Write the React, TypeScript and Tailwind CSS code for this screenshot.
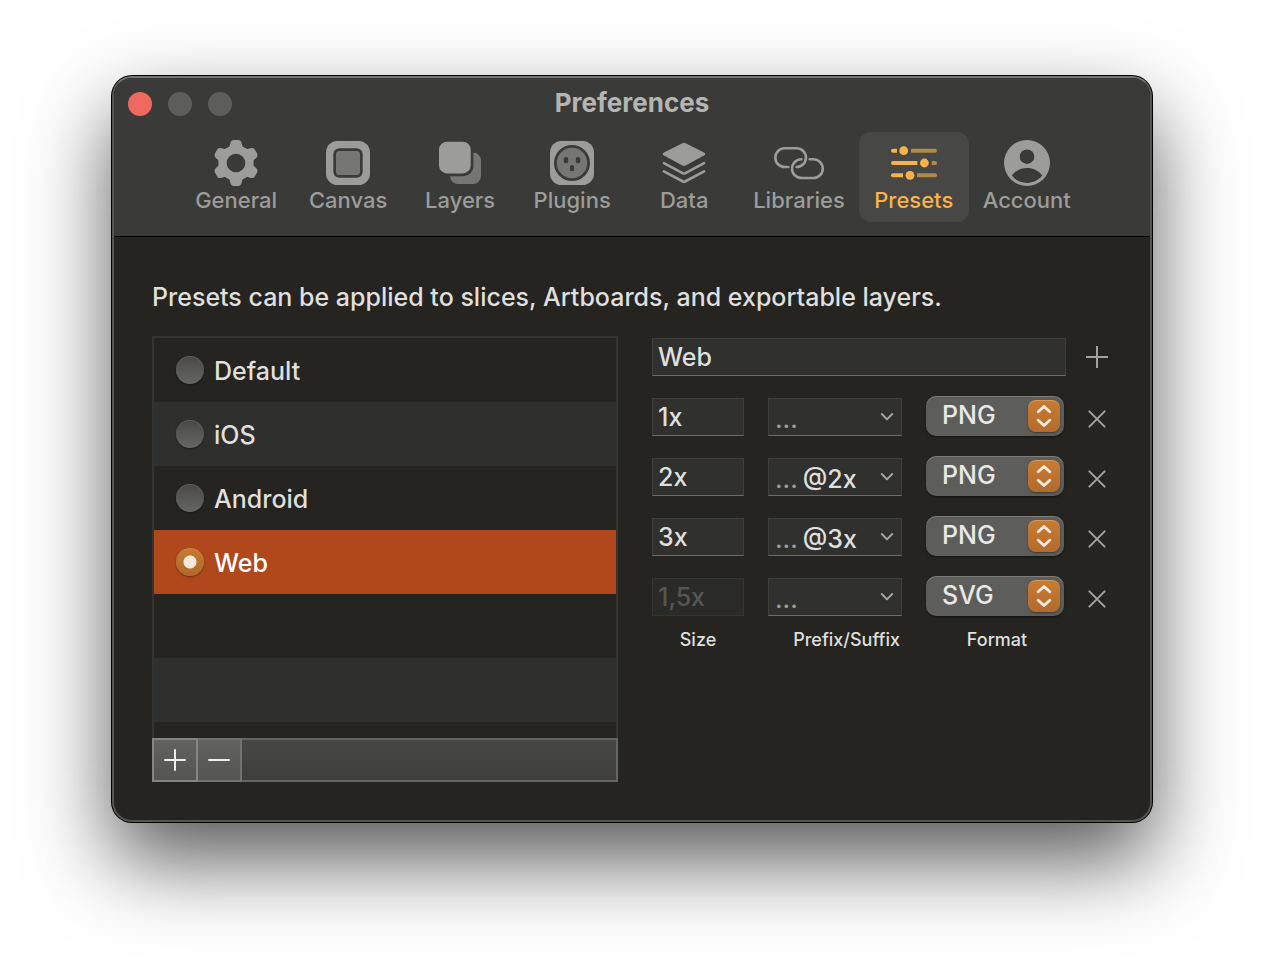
import { useState } from "react";
import type { ReactNode } from "react";

function Icon({ children }: { children: ReactNode }) {
  return (
    <svg viewBox="0 0 48 48" className="size-12 shrink-0" aria-hidden="true">
      {children}
    </svg>
  );
}

const LIGHT = "#9c9c9a";
const MID = "#767674";
const DARK = "#3a3a38";
const AMBER = "#f9b24a";
const AMBER_DIM = "#b3894a";

const GearIcon = () => (
  <Icon>
    <g fill={LIGHT}>
      <circle cx="24" cy="24" r="17.6" />
      {[0, 60, 120, 180, 240, 300].map((angle) => (
        <path
          key={angle}
          transform={`rotate(${angle} 24 24)`}
          d="M14.6 9.8C16.8 8.6 17.6 8 17.9 6L18.3 4.4C18.8 1.9 20 1 22 1H26C28 1 29.2 1.9 29.7 4.4L30.1 6C30.4 8 31.2 8.6 33.4 9.8L30 16H18Z"
        />
      ))}
    </g>
    <circle cx="24" cy="24" r="9.3" fill={DARK} />
  </Icon>
);

const CanvasIcon = () => (
  <Icon>
    <rect x="2" y="2" width="44" height="44" rx="11.5" fill={LIGHT} />
    <rect x="9.3" y="9.3" width="29.4" height="29.4" rx="6" fill={DARK} />
    <rect x="12" y="12" width="24" height="24" rx="3.6" fill={MID} />
  </Icon>
);

const LayersIcon = () => (
  <Icon>
    <rect x="14" y="13.6" width="31" height="31.4" rx="8" fill={MID} />
    <rect x="0.2" y="0" width="37.2" height="37.2" rx="10" fill={DARK} />
    <rect x="3" y="2.7" width="31.7" height="31.7" rx="8" fill={LIGHT} />
  </Icon>
);

const PluginsIcon = () => (
  <Icon>
    <rect x="2" y="2" width="44" height="44" rx="11.5" fill={LIGHT} />
    <circle cx="24" cy="24" r="18" fill={DARK} />
    <circle cx="24" cy="24" r="15.2" fill={MID} />
    <g fill={DARK}>
      <rect x="15.8" y="18" width="4.4" height="6.2" rx="1.8" />
      <rect x="27.8" y="18" width="4.4" height="6.2" rx="1.8" />
      <path d="M21.9 28.2a2.1 2.1 0 0 1 4.2 0V31a1 1 0 0 1-1 1h-2.2a1 1 0 0 1-1-1Z" />
    </g>
  </Icon>
);

const DataIcon = () => (
  <Icon>
    <path
      d="M22.4 4.2Q24 3.3 25.6 4.2L44 13.4Q46.4 15 44 16.6L25.6 26.6Q24 27.5 22.4 26.6L4 16.6Q1.6 15 4 13.4Z"
      fill={LIGHT}
    />
    <path
      d="M3.9 24.2L23 34.3Q24 34.8 25 34.3L44.1 24.2M3.9 32.4L23 42.5Q24 43 25 42.5L44.1 32.4"
      fill="none"
      stroke={LIGHT}
      strokeWidth="2.6"
      strokeLinecap="round"
    />
  </Icon>
);

const LibrariesIcon = () => (
  <svg viewBox="-1 -8 52 48" className="h-12 w-13 shrink-0" aria-hidden="true">
    <g fill="none" stroke={LIGHT} strokeWidth="2.6" strokeLinecap="round">
      <path d="M14.3 20H10.7a9.35 9.35 0 0 1 0-18.7H22.6a9.35 9.35 0 0 1 0 18.7" />
      <path d="M35.7 12.3H39.4a9.35 9.35 0 0 1 0 18.7H27.4a9.35 9.35 0 0 1 0-18.7" />
    </g>
  </svg>
);

const PresetsIcon = () => (
  <Icon>
    <g fill={AMBER}>
      <path d="M7 9.7V13.7H3A2 2 0 0 1 3 9.7Z" />
      <circle cx="13.7" cy="11.7" r="4.4" />
      <path d="M27.3 22V26H3A2 2 0 0 1 3 22Z" />
      <circle cx="34.4" cy="24" r="4.4" />
      <path d="M13 34.3V38.3H3A2 2 0 0 1 3 34.3Z" />
      <circle cx="20" cy="36.3" r="4.4" />
    </g>
    <g fill={AMBER_DIM}>
      <path d="M21 9.7V13.7H45A2 2 0 0 0 45 9.7Z" />
      <path d="M41.7 22V26H45A2 2 0 0 0 45 22Z" />
      <path d="M27 34.3V38.3H45A2 2 0 0 0 45 34.3Z" />
    </g>
  </Icon>
);

const AccountIcon = () => (
  <Icon>
    <circle cx="24" cy="24" r="23" fill={LIGHT} />
    <circle cx="24" cy="17.7" r="7.3" fill={DARK} />
    <path d="M8.8 36.6C12.4 31.6 17.8 29 24 29S35.6 31.6 39.2 36.6C35.6 41.2 30.2 43.9 24 43.9S12.4 41.2 8.8 36.6Z" fill={DARK} />
  </Icon>
);

const tabs = [
  { name: "General", icon: GearIcon },
  { name: "Canvas", icon: CanvasIcon },
  { name: "Layers", icon: LayersIcon },
  { name: "Plugins", icon: PluginsIcon },
  { name: "Data", icon: DataIcon },
  { name: "Libraries", icon: LibrariesIcon },
  { name: "Presets", icon: PresetsIcon },
  { name: "Account", icon: AccountIcon },
];

const presets = ["Default", "iOS", "Android", "Web"];

const sizes = [
  { size: "1x", affix: "", format: "PNG", disabled: false },
  { size: "2x", affix: "@2x", format: "PNG", disabled: false },
  { size: "3x", affix: "@3x", format: "PNG", disabled: false },
  { size: "1,5x", affix: "", format: "SVG", disabled: true },
];

const field =
  "h-[38px] min-w-0 self-end border border-[#3e3e3d] border-b-[#6c6c6a] bg-[#30302f] text-[25px] font-medium text-[#dfdfdd] outline-none";

function Toolbar() {
  return (
    <header className="border-b border-black bg-[#3a3a38] pb-3.5">
      <div className="grid h-[52px] grid-cols-[1fr_auto_1fr] items-center px-3.5">
        <div className="flex gap-4">
          <button aria-label="Close" className="size-6 rounded-full bg-[#ee6a5f]" />
          <button aria-label="Minimize" className="size-6 rounded-full bg-[#5d5d5b]" />
          <button aria-label="Zoom" className="size-6 rounded-full bg-[#5d5d5b]" />
        </div>
        <h1 className="pb-0.5 text-[26px] leading-8 font-bold text-[#b5b5b3]">Preferences</h1>
      </div>
      <nav className="flex justify-center gap-0.5 pt-0.5">
        {tabs.map(({ name, icon: TabIcon }) => (
          <button
            key={name}
            aria-current={name === "Presets" ? "page" : undefined}
            className={
              name === "Presets"
                ? "flex min-w-[110px] flex-col items-center rounded-xl bg-[#474745] px-3 pt-[7px] pb-[9px] text-[22px] leading-[26px] font-medium text-[#f9b24a]"
                : "flex min-w-[110px] flex-col items-center rounded-xl px-3 pt-[7px] pb-[9px] text-[22px] leading-[26px] font-medium text-[#9c9c9a]"
            }
          >
            <TabIcon />
            {name}
          </button>
        ))}
      </nav>
    </header>
  );
}

function PresetList() {
  const [selected, setSelected] = useState("Web");
  return (
    <section className="min-w-0 flex-1">
      <div className="border-2 border-b-0 border-[#333534]">
        {presets.map((name) => (
          <label
            key={name}
            className="flex h-16 items-center gap-2.5 px-[22px] text-[25px] font-medium text-[#dfdfdd] even:bg-[#2f2f2e] has-checked:bg-[#b0481c] has-checked:text-white"
          >
            <input
              type="radio"
              name="preset"
              checked={selected === name}
              onChange={() => setSelected(name)}
              className="size-7 appearance-none rounded-full bg-linear-to-b from-[#484847] to-[#666665] shadow-[0_1px_2px_rgba(0,0,0,0.4),inset_0_1px_0_rgba(255,255,255,0.12)] checked:bg-[radial-gradient(circle,#f5e8da_6px,transparent_7px),linear-gradient(#c87a32,#b0692b)]"
            />
            <span className="pt-1">{name}</span>
          </label>
        ))}
        <div className="h-16" />
        <div className="h-16 bg-[#2f2f2e]" />
        <div className="h-4" />
      </div>
      <div className="flex h-11 border-2 border-[#666665] bg-linear-to-b from-[#474746] to-[#3e3e3d]">
        <button
          aria-label="Add preset"
          className="-my-0.5 -ml-0.5 flex w-[46px] items-center justify-center border-2 border-[#858584] bg-linear-to-b from-[#626261] to-[#545453]"
        >
          <svg viewBox="0 0 22 22" className="size-[22px]" aria-hidden="true">
            <path d="M11 1V21M1 11H21" stroke="#efefed" strokeWidth="2" strokeLinecap="round" />
          </svg>
        </button>
        <button
          aria-label="Remove preset"
          className="-my-0.5 flex w-11 items-center justify-center border-2 border-l-0 border-[#727271] bg-linear-to-b from-[#626261] to-[#545453]"
        >
          <svg viewBox="0 0 22 22" className="size-[22px]" aria-hidden="true">
            <path d="M1 11H21" stroke="#efefed" strokeWidth="2" strokeLinecap="round" />
          </svg>
        </button>
      </div>
    </section>
  );
}

function AffixField({ value }: { value: string }) {
  return (
    <div className={`${field} flex items-center pl-1.5`}>
      <span className="pt-1.5 text-[#9b9b99]">...</span>
      <input aria-label="Prefix or suffix" defaultValue={value} className="ml-[5px] w-0 min-w-0 flex-1 pt-1.5 outline-none" />
      <button aria-label="Show affix options" className="flex h-full w-7 items-center justify-center">
        <svg viewBox="0 0 14 10" className="h-2.5 w-3.5" aria-hidden="true">
          <path d="M1.8 2L7 7.4L12.2 2" fill="none" stroke="#a2a2a0" strokeWidth="2" strokeLinecap="round" strokeLinejoin="round" />
        </svg>
      </button>
    </div>
  );
}

function FormatSelect({ value }: { value: string }) {
  return (
    <div className="relative">
      <select
        aria-label="Format"
        defaultValue={value}
        className="block h-10 w-full appearance-none rounded-[10px] bg-[#5d5d5b] pr-10 pl-4 text-[25px] font-medium text-[#e8e8e6] shadow-[0_1px_2px_rgba(0,0,0,0.5),inset_0_1px_0_rgba(255,255,255,0.2)] outline-none"
      >
        <option>PNG</option>
        <option>SVG</option>
      </select>
      <span className="pointer-events-none absolute top-1 right-1 flex size-8 items-center justify-center rounded-lg bg-linear-to-b from-[#c97b31] to-[#b36b2c] shadow-[0_1px_2px_rgba(0,0,0,0.4),inset_0_1px_0_rgba(255,255,255,0.2)]">
        <svg viewBox="0 0 16 24" className="h-6 w-4" aria-hidden="true">
          <path d="M2.2 7.8L8 2.4L13.8 7.8M2.2 16.2L8 21.6L13.8 16.2" fill="none" stroke="#f6ebe0" strokeWidth="2.8" strokeLinecap="round" strokeLinejoin="round" />
        </svg>
      </span>
    </div>
  );
}

function PresetEditor() {
  return (
    <section className="grid w-[460px] shrink-0 grid-cols-[92px_134px_138px_24px] content-start gap-x-6 gap-y-5">
      <div className="col-span-4 flex h-10 justify-between">
        <input aria-label="Preset name" defaultValue="Web" className={`${field} w-[414px] px-[5px]`} />
        <button aria-label="Add size" className="flex h-[38px] w-[30px] items-center justify-center self-end">
          <svg viewBox="0 0 22 22" className="size-[22px]" aria-hidden="true">
            <path d="M11 0V22M0 11H22" stroke="#a2a2a0" strokeWidth="2" />
          </svg>
        </button>
      </div>
      {sizes.map((row) => (
        <div key={row.size} className="col-span-4 grid h-10 grid-cols-subgrid">
          <input
            aria-label="Size"
            defaultValue={row.size}
            disabled={row.disabled}
            className={`${field} w-full px-[5px] disabled:border-[#353534] disabled:bg-[#2a2a28] disabled:text-[#565654]`}
          />
          <AffixField value={row.affix} />
          <FormatSelect value={row.format} />
          <button aria-label="Remove size" className="-ml-1.5 flex h-[34px] items-center justify-center self-end">
            <svg viewBox="0 0 18 18" className="size-[18px]" aria-hidden="true">
              <path d="M1.4 1.4L16.6 16.6M16.6 1.4L1.4 16.6" stroke="#a2a2a0" strokeWidth="2" strokeLinecap="round" />
            </svg>
          </button>
        </div>
      ))}
      <div className="col-span-4 -mt-2 grid grid-cols-subgrid text-lg leading-6 font-medium text-[#dfdfdd]">
        <span className="text-center">Size</span>
        <span className="pr-0.5 text-right">Prefix/Suffix</span>
        <span className="pl-1 text-center">Format</span>
      </div>
    </section>
  );
}

export default function App() {
  return (
    <div className="min-h-screen bg-white px-28 pt-19 pb-36 font-['Inter','Liberation_Sans',sans-serif]">
      <main className="overflow-hidden rounded-[20px] border-2 border-[#555553] border-t-[#747472] bg-[#252421] shadow-[0_0_0_1px_#000,0_38px_84px_rgba(0,0,0,0.66)]">
        <Toolbar />
        <div className="px-[38px] pt-[42px] pb-[38px]">
          <p className="mb-[21px] text-[25px] leading-9 font-medium text-[#dfdfdd]">
            Presets can be applied to slices, Artboards, and exportable layers.
          </p>
          <div className="flex gap-[34px]">
            <PresetList />
            <PresetEditor />
          </div>
        </div>
      </main>
    </div>
  );
}
